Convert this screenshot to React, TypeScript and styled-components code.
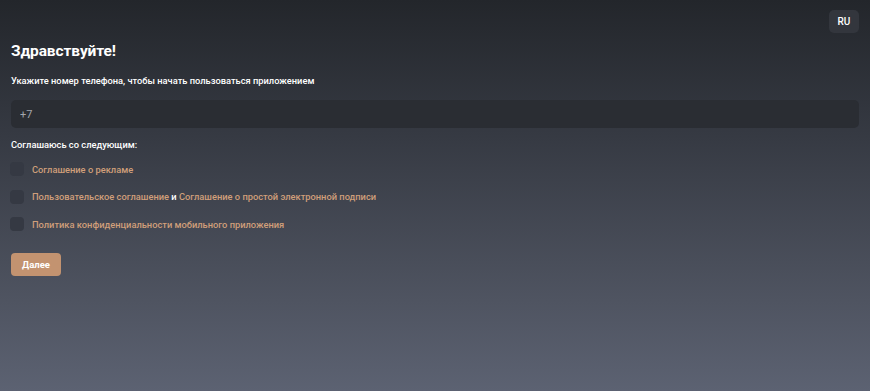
import React, {useState} from "react";
import styled, {createGlobalStyle} from "styled-components";

const GlobalStyle = createGlobalStyle`
  html, body {
    margin: 0;
    padding: 0;
    height: 100%;
  }
  body {
    font-family: Roboto, "Noto Sans", Arial, sans-serif;
    background: #24272c;
  }
  #root {
    min-height: 100%;
  }
`

const agreements = [
    {id: 'ads', parts: [{text: 'Соглашение о рекламе', link: true}]},
    {
        id: 'terms', parts: [
            {text: 'Пользовательское соглашение', link: true},
            {text: ' и ', link: false},
            {text: 'Соглашение о простой электронной подписи', link: true},
        ]
    },
    {id: 'privacy', parts: [{text: 'Политика конфиденциальности мобильного приложения', link: true}]},
]

const App: React.FC = () => {
    const [checked, setChecked] = useState<Record<string, boolean>>({})
    const toggle = (id: string) => setChecked(prev => ({...prev, [id]: !prev[id]}))

    return (
        <>
            <GlobalStyle/>
            <Page>
                <TopBar>
                    <LangButton>RU</LangButton>
                </TopBar>
                <Content>
                    <Title>Здравствуйте!</Title>
                    <Subtitle>Укажите номер телефона, чтобы начать пользоваться приложением</Subtitle>
                    <PhoneInput defaultValue="+7"/>
                    <Label>Соглашаюсь со следующим:</Label>
                    <AgreementList>
                        {agreements.map(item => (
                            <AgreementRow key={item.id}>
                                <Checkbox $checked={!!checked[item.id]} onClick={() => toggle(item.id)}/>
                                <AgreementText>
                                    {item.parts.map((p, i) => p.link
                                        ? <Link key={i}>{p.text}</Link>
                                        : <span key={i}>{p.text}</span>)}
                                </AgreementText>
                            </AgreementRow>
                        ))}
                    </AgreementList>
                    <SubmitButton>Далее</SubmitButton>
                </Content>
            </Page>
        </>
    )
}

export default App

const Page = styled.div`
  width: 100%;
  min-height: 100vh;
  box-sizing: border-box;
  background: linear-gradient(180deg, #23262b 0%, #363a43 35%, #4f5461 77%, #5c6272 100%);
  color: #fff;
`
const TopBar = styled.div`
  display: flex;
  justify-content: flex-end;
  padding: 10px 11px 0 11px;
`
const LangButton = styled.button`
  width: 30px;
  height: 23px;
  border: 0;
  border-radius: 5px;
  background: #33363d;
  color: #fff;
  font-family: Roboto, sans-serif;
  font-size: 10px;
  font-weight: 500;
  padding: 0;
  cursor: pointer;
`
const Content = styled.div`
  display: flex;
  flex-direction: column;
  align-items: flex-start;
  padding: 0 11px;
`
const Title = styled.h1`
  margin: 7px 0 0 0;
  font-size: 15.5px;
  line-height: 22px;
  font-weight: 700;
  letter-spacing: -0.1px;
`
const Subtitle = styled.p`
  margin: 12px 0 0 0;
  font-size: 9.3px;
  line-height: 14px;
  font-weight: 500;
`
const PhoneInput = styled.input`
  box-sizing: border-box;
  width: 100%;
  height: 28px;
  margin-top: 12px;
  border: 0;
  outline: none;
  border-radius: 5px;
  background: #2a2d33;
  color: #a3a6ad;
  font-family: Roboto, sans-serif;
  font-size: 11px;
  padding: 0 9px;
`
const Label = styled.p`
  margin: 10px 0 0 0;
  font-size: 9.3px;
  line-height: 14px;
  font-weight: 500;
`
const AgreementList = styled.div`
  display: flex;
  flex-direction: column;
  gap: 13.5px;
  margin-top: 10px;
`
const AgreementRow = styled.label`
  display: flex;
  align-items: center;
  gap: 8px;
  height: 14px;
`
const Checkbox = styled.span<{ $checked: boolean }>`
  width: 14px;
  height: 14px;
  margin-left: -1px;
  border-radius: 4px;
  background: ${p => p.$checked ? '#c39370' : '#353943'};
  flex-shrink: 0;
  cursor: pointer;
`
const AgreementText = styled.span`
  font-size: 9.3px;
  font-weight: 500;
  color: #fff;
`
const Link = styled.span`
  color: #d09f7a;
  cursor: pointer;
`
const SubmitButton = styled.button`
  margin-top: 22px;
  width: 50px;
  height: 23px;
  border: 0;
  border-radius: 4px;
  background: #c39370;
  color: #fff;
  font-family: Roboto, sans-serif;
  font-size: 9.5px;
  font-weight: 700;
  padding: 0;
  cursor: pointer;
`
